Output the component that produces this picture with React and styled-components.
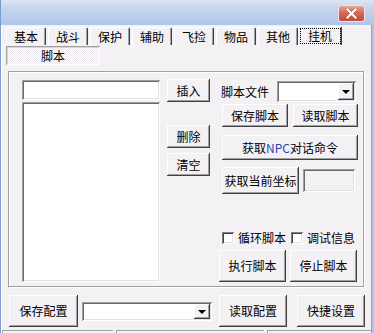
import styled, { createGlobalStyle } from "styled-components";

const FACE = "#f4f1f5";
const FONT = `"Noto Sans CJK SC", "Noto Sans", sans-serif`;

const GlobalStyle = createGlobalStyle`
  * { box-sizing: border-box; }
  html, body { margin: 0; padding: 0; background: #b0c6e9; }
  body { font-family: ${FONT}; font-size: 12px; color: #000; }
`;

// 볼록 버튼 테두리
const raised = `
  box-shadow: inset -1px -1px #404040, inset 1px 1px #ffffff,
    inset -2px -2px #a0a0a0, inset 2px 2px ${FACE};
`;
// 오목 입력칸 테두리
const sunken = `
  box-shadow: inset 1px 1px #a0a0a0, inset -1px -1px #ffffff,
    inset 2px 2px #696969, inset -2px -2px #e3e0e4;
`;

const Window = styled.div`
  width: 374px;
  height: 333px;
  display: flex;
  flex-direction: column;
  overflow: hidden;
  border-left: 1px solid #7d9bd0;
  background: #b0c6e9;
`;

const TitleBar = styled.div`
  height: 25px;
  flex-shrink: 0;
  display: flex;
  justify-content: flex-end;
  align-items: flex-start;
  padding: 5px 9px 0 0;
  background: linear-gradient(#dbe5f4 0%, #c5d5ee 35%, #aec5e8 100%);
`;

const CloseButton = styled.div`
  width: 27px;
  height: 17px;
  border-radius: 3px;
  border: 1px solid #f3e4e2;
  background: linear-gradient(#e6a596 0%, #d46c58 45%, #c24b35 100%);
  display: flex;
  align-items: center;
  justify-content: center;
`;

const Client = styled.div`
  flex: 1;
  display: flex;
  flex-direction: column;
  margin-right: 2px;
  background: ${FACE};
  border-left: 1px solid #ffffff;
  border-right: 1px solid #a0a0a0;
`;

const TabRow = styled.div`
  height: 20px;
  display: flex;
  align-items: flex-end;
  gap: 2px;
  padding-left: 4px;
`;

const Tab = styled.div`
  width: ${(p) => (p.$active ? 44 : 40)}px;
  height: ${(p) => (p.$active ? 19 : 18)}px;
  margin: ${(p) => (p.$active ? "0 -2px" : "0")};
  display: flex;
  align-items: center;
  justify-content: center;
  border-top: 1px solid #ffffff;
  border-left: 1px solid #ffffff;
  border-right: 1px solid #404040;
  border-radius: 2px 2px 0 0;
  box-shadow: inset -1px 0 #a0a0a0;
  background: ${FACE};
  line-height: 14px;
`;

const Focus = styled.span`
  display: flex;
  align-items: center;
  justify-content: center;
  width: 41px;
  height: 16px;
  outline: 1px dotted #000;
  outline-offset: -1px;
`;

const SubTab = styled.div`
  width: 94px;
  height: 19px;
  margin: 1px 0 0 4px;
  display: flex;
  align-items: center;
  justify-content: center;
  background-color: #ffffff;
  background-image: repeating-conic-gradient(#ffffff 0 25%, #ebe7ec 0 50%);
  background-size: 2px 2px;
  box-shadow: inset 1px 1px #a0a0a0, inset -1px -1px #ffffff,
    inset 2px 2px #d8d4d8;
`;

const Panel = styled.div`
  width: 356px;
  height: 216px;
  margin: 6px 0 0 6px;
  padding: 8px 0 0 13px;
  display: flex;
  align-items: flex-start;
  border: 1px solid #a0a0a0;
  box-shadow: inset 1px 1px #ffffff, 1px 1px #ffffff;
`;

const LeftCol = styled.div`
  width: 138px;
  display: flex;
  flex-direction: column;
  gap: 2px;
`;

const TextBox = styled.div`
  width: ${(p) => p.$w || 138}px;
  height: ${(p) => p.$h || 20}px;
  margin-left: ${(p) => p.$ml || 0}px;
  background: ${(p) => (p.$readonly ? FACE : "#ffffff")};
  ${sunken}
`;

const ButtonCol = styled.div`
  width: 43px;
  margin-left: 7px;
  display: flex;
  flex-direction: column;
`;

const Button = styled.div`
  width: ${(p) => p.$w}px;
  height: ${(p) => p.$h}px;
  margin-top: ${(p) => p.$mt || 0}px;
  margin-left: ${(p) => p.$ml || 0}px;
  flex-shrink: 0;
  display: flex;
  align-items: center;
  justify-content: center;
  background: ${FACE};
  line-height: 14px;
  white-space: nowrap;
  ${raised}
`;

const Npc = styled.span`
  color: #2b3fb3;
`;

const RightCol = styled.div`
  width: 139px;
  margin-left: 9px;
  display: flex;
  flex-direction: column;
`;

const Row = styled.div`
  display: flex;
  align-items: center;
  height: ${(p) => p.$h}px;
  margin-top: ${(p) => p.$mt || 0}px;
  gap: ${(p) => p.$gap || 0}px;
`;

const Label = styled.span`
  margin-left: ${(p) => p.$ml || 0}px;
  white-space: nowrap;
  line-height: 14px;
`;

const Combo = styled.div`
  width: ${(p) => p.$w}px;
  height: ${(p) => p.$h}px;
  margin-left: ${(p) => p.$ml || 0}px;
  padding: 2px;
  display: flex;
  justify-content: flex-end;
  background: #ffffff;
  ${sunken}
`;

const DropButton = styled.div`
  width: 16px;
  height: 100%;
  display: flex;
  align-items: center;
  justify-content: center;
  background: ${FACE};
  ${raised}
  &::after {
    content: "";
    border-left: 4px solid transparent;
    border-right: 4px solid transparent;
    border-top: 4px solid #000;
    margin-top: 1px;
  }
`;

const CheckBox = styled.span`
  width: 12px;
  height: 12px;
  margin-left: ${(p) => p.$ml || 0}px;
  flex-shrink: 0;
  background: #ffffff;
  box-shadow: inset 1px 1px #808080, inset -1px -1px #ffffff,
    inset 2px 2px #404040, inset -2px -2px #e3e0e4;
`;

const BottomRow = styled.div`
  height: 32px;
  margin-top: 8px;
  display: flex;
  align-items: center;
`;

const StatusBar = styled.div`
  flex: 1;
  margin-top: 3px;
  display: flex;
  gap: 3px;
`;

const StatusPane = styled.div`
  width: ${(p) => (p.$w ? `${p.$w}px` : "auto")};
  flex: ${(p) => (p.$w ? "none" : 1)};
  border-top: 1px solid #a0a0a0;
  border-left: 1px solid #a0a0a0;
`;

const tabs = ["基本", "战斗", "保护", "辅助", "飞捡", "物品", "其他"];

function CloseIcon() {
  return (
    <svg width="13" height="11" viewBox="0 0 13 11">
      <path d="M2.5 1.5 L10.5 9.5 M10.5 1.5 L2.5 9.5" stroke="#8e3a2c" strokeWidth="3.6" strokeLinecap="round" opacity="0.45" />
      <path d="M2.5 1.5 L10.5 9.5 M10.5 1.5 L2.5 9.5" stroke="#ffffff" strokeWidth="2.2" strokeLinecap="square" />
    </svg>
  );
}

export default function App() {
  return (
    <>
      <GlobalStyle />
      <Window>
        <TitleBar>
          <CloseButton>
            <CloseIcon />
          </CloseButton>
        </TitleBar>
        <Client>
          <TabRow>
            {tabs.map((t) => (
              <Tab key={t}>{t}</Tab>
            ))}
            <Tab $active>
              <Focus>挂机</Focus>
            </Tab>
          </TabRow>
          <SubTab>脚本</SubTab>

          <Panel>
            <LeftCol>
              <TextBox />
              <TextBox $h={180} />
            </LeftCol>

            <ButtonCol>
              <Button $w={43} $h={23} $mt={-1}>插入</Button>
              <Button $w={43} $h={23} $mt={23}>删除</Button>
              <Button $w={43} $h={23} $mt={5}>清空</Button>
            </ButtonCol>

            <RightCol>
              <Row $h={21} $mt={1}>
                <Label $ml={2}>脚本文件</Label>
                <Combo $w={79} $h={21} $ml={8}>
                  <DropButton />
                </Combo>
              </Row>
              <Row $h={23} $mt={2}>
                <Button $w={66} $h={23} $ml={3}>保存脚本</Button>
                <Button $w={65} $h={23} $ml={5}>读取脚本</Button>
              </Row>
              <Row $h={25} $mt={8}>
                <Button $w={136} $h={25} $ml={3}>
                  获取<Npc>NPC</Npc>对话命令
                </Button>
              </Row>
              <Row $h={27} $mt={7}>
                <Button $w={77} $h={27} $ml={3}>获取当前坐标</Button>
                <TextBox $w={52} $h={23} $ml={4} $readonly />
              </Row>
              <Row $h={12} $mt={38}>
                <CheckBox $ml={3} />
                <Label $ml={4}>循环脚本</Label>
                <CheckBox $ml={5} />
                <Label $ml={4}>调试信息</Label>
              </Row>
              <Row $h={32} $mt={6}>
                <Button $w={67} $h={32}>执行脚本</Button>
                <Button $w={67} $h={32} $ml={4}>停止脚本</Button>
              </Row>
            </RightCol>
          </Panel>

          <BottomRow>
            <Button $w={69} $h={32} $ml={7}>保存配置</Button>
            <Combo $w={130} $h={19} $ml={4}>
              <DropButton />
            </Combo>
            <Button $w={68} $h={32} $ml={7}>读取配置</Button>
            <Button $w={68} $h={32} $ml={10}>快捷设置</Button>
          </BottomRow>

          <StatusBar>
            <StatusPane $w={111} />
            <StatusPane $w={148} />
            <StatusPane />
          </StatusBar>
        </Client>
      </Window>
    </>
  );
}
